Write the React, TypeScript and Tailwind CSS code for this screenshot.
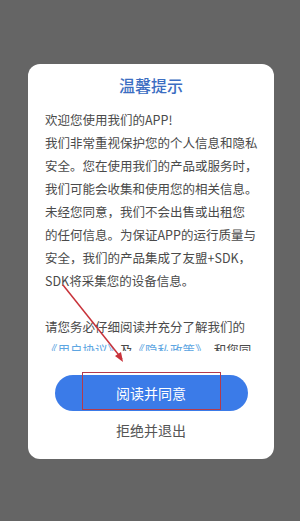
import React from "react";

const lines = [
  "欢迎您使用我们的APP!",
  "我们非常重视保护您的个人信息和隐私",
  "安全。您在使用我们的产品或服务时，",
  "我们可能会收集和使用您的相关信息。",
  "未经您同意，我们不会出售或出租您",
  "的任何信息。为保证APP的运行质量与",
  "安全，我们的产品集成了友盟+SDK，",
  "SDK将采集您的设备信息。",
];

export default function App() {
  return (
    <div
      className="relative h-[521px] w-[300px] bg-[#656565] pt-[64px] pl-[28px]"
      style={{ fontFamily: '"Noto Sans CJK SC", "Noto Sans", sans-serif' }}
    >
      <div className="flex w-[246px] flex-col rounded-[12px] bg-white pt-[10px] pb-[19px]">
        <div className="text-center text-[16px] leading-[22px] font-medium text-[#3c6ec2]">
          温馨提示
        </div>
        <div className="mt-[12px] h-[243px] overflow-hidden px-[17px] text-[12.5px] leading-[23px] text-[#4a4a4a]">
          {lines.map((l, i) => (
            <div key={i} className="whitespace-nowrap">
              {l}
            </div>
          ))}
          <div className="h-[23px]" />
          <div className="whitespace-nowrap">请您务必仔细阅读并充分了解我们的</div>
          <div className="whitespace-nowrap">
            <span className="text-[#5ea6e2]">《用户协议》</span>及
            <span className="text-[#5ea6e2]">《隐私政策》</span>，和您同
          </div>
        </div>
        <div className="relative mx-auto mt-[24px] flex h-[36px] w-[193px] items-center justify-center rounded-full bg-[#3b7be8] text-[14px] text-white">
          阅读并同意
          <div className="absolute top-[-3px] left-[27px] h-[38px] w-[139px] border-[1.5px] border-[#b43a4c]" />
        </div>
        <div className="mt-[9px] text-center text-[14px] leading-[20px] text-[#555555]">
          拒绝并退出
        </div>
      </div>
      <svg
        className="pointer-events-none absolute top-0 left-0"
        width="300"
        height="521"
        viewBox="0 0 300 521"
      >
        <line x1="63" y1="285" x2="122" y2="359" stroke="#c8323a" strokeWidth="1.5" />
        <polygon points="123,362 115,356 121,352" fill="#c8323a" />
      </svg>
    </div>
  );
}
